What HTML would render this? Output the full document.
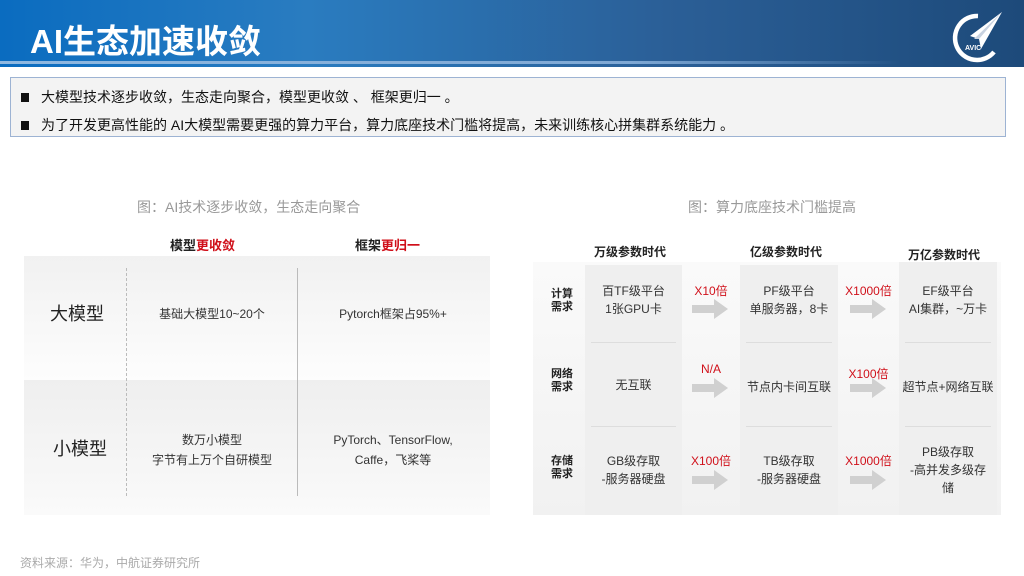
<!DOCTYPE html>
<html><head><meta charset="utf-8"><style>
*{margin:0;padding:0;box-sizing:border-box}
body{width:1024px;height:576px;position:relative;background:#fff;font-family:"Liberation Sans","Noto Sans CJK SC",sans-serif;overflow:hidden;color:#222}
.a{position:absolute}
.hdr{left:0;top:0;width:1024px;height:67px;background:linear-gradient(90deg,#0a6cc0 0%,#2a7cc0 30%,#2b5f97 65%,#1d4a7a 100%)}
.hl{left:0;top:61px;width:900px;height:3px;background:linear-gradient(90deg,#8fb8e0,#7fa8d4 70%,rgba(120,160,210,0))}
.title{left:30px;top:15px;font-size:33px;font-weight:bold;color:#fff}
.box{left:10px;top:77px;width:996px;height:60px;background:#f3f3f3;border:1px solid #9db3d3}
.box p{font-size:14px;line-height:28px;padding-left:10px;color:#111}
.box p b{display:inline-block;width:8px;height:9px;background:#111;margin-right:12px;vertical-align:0}
.cap{font-size:14px;color:#999}
.c{text-align:center}
.t{font-size:12px;color:#333}
.arrow{width:36px;height:20px}
.red{color:#d0101a}
</style></head><body>
<div class="a hdr"></div><div class="a hl"></div>
<div class="a title">AI生态加速收敛</div>
<svg class="a" style="left:948px;top:12px" width="56" height="52" viewBox="0 0 56 52">
<path d="M30 4 A22 22 0 1 0 46 40" fill="none" stroke="#fff" stroke-width="4.5"/>
<path d="M54 0 L22 24 L31 27 L33 37 Z" fill="#fff"/>
<path d="M54 0 L26 27 L31 27 Z" fill="#c8d2e0"/>
<text x="17" y="38" font-size="7" fill="#fff" font-family="Liberation Sans" font-weight="bold">AVIC</text>
</svg>
<div class="a box"><p style="margin-top:5px"><b></b>大模型技术逐步收敛，生态走向聚合，模型更收敛 、 框架更归一 。</p><p><b></b>为了开发更高性能的 AI大模型需要更强的算力平台，算力底座技术门槛将提高，未来训练核心拼集群系统能力 。</p></div>
<div class="a cap" style="left:137px;top:197px">图：AI技术逐步收敛，生态走向聚合</div>
<div class="a cap" style="left:688px;top:197px">图：算力底座技术门槛提高</div>
<div class="a" style="left:170px;top:235px;font-size:13px;font-weight:bold">模型<span class="red">更收敛</span></div>
<div class="a" style="left:355px;top:235px;font-size:13px;font-weight:bold">框架<span class="red">更归一</span></div>
<div class="a" style="left:24px;top:256px;width:466px;height:124px;background:linear-gradient(#f1f1f1,#fdfdfd)"></div>
<div class="a" style="left:24px;top:380px;width:466px;height:135px;background:linear-gradient(#efefef,#fafafa)"></div>
<div class="a" style="left:126px;top:268px;width:0;height:228px;border-left:1px dashed #bbb"></div>
<div class="a" style="left:297px;top:268px;width:0;height:228px;border-left:1px solid #bbb"></div>
<div class="a" style="left:50px;top:300px;font-size:18px">大模型</div>
<div class="a" style="left:53px;top:435px;font-size:18px">小模型</div>
<div class="a c t" style="left:127px;top:305px;width:170px">基础大模型10~20个</div>
<div class="a c t" style="left:298px;top:305px;width:190px">Pytorch框架占95%+</div>
<div class="a c t" style="left:127px;top:430px;width:170px;line-height:20px">数万小模型<br>字节有上万个自研模型</div>
<div class="a c t" style="left:298px;top:430px;width:190px;line-height:20px">PyTorch、TensorFlow,<br>Caffe，飞桨等</div>
<div class="a" style="left:533px;top:262px;width:468px;height:253px;background:linear-gradient(#fafafa,#f1f1f1)"></div>
<div class="a" style="left:585px;top:265px;width:97px;height:250px;background:#efefef"></div>
<div class="a" style="left:740px;top:265px;width:98px;height:250px;background:#efefef"></div>
<div class="a" style="left:899px;top:262px;width:98px;height:253px;background:#efefef"></div>
<div class="a" style="left:591px;top:342px;width:85px;height:1px;background:#ddd"></div>
<div class="a" style="left:746px;top:342px;width:86px;height:1px;background:#ddd"></div>
<div class="a" style="left:905px;top:342px;width:86px;height:1px;background:#ddd"></div>
<div class="a" style="left:591px;top:426px;width:85px;height:1px;background:#ddd"></div>
<div class="a" style="left:746px;top:426px;width:86px;height:1px;background:#ddd"></div>
<div class="a" style="left:905px;top:426px;width:86px;height:1px;background:#ddd"></div>
<div class="a" style="left:594px;top:243px;font-size:12px;font-weight:bold">万级参数时代</div>
<div class="a" style="left:750px;top:243px;font-size:12px;font-weight:bold">亿级参数时代</div>
<div class="a" style="left:908px;top:246px;font-size:12px;font-weight:bold">万亿参数时代</div>
<div class="a" style="left:551px;top:288px;font-size:11px;font-weight:bold;line-height:13px">计算<br>需求</div>
<div class="a" style="left:551px;top:368px;font-size:11px;font-weight:bold;line-height:13px">网络<br>需求</div>
<div class="a" style="left:551px;top:455px;font-size:11px;font-weight:bold;line-height:13px">存储<br>需求</div>
<div class="a c t" style="left:583px;top:282px;width:101px;line-height:18px">百TF级平台<br>1张GPU卡</div>
<div class="a c t" style="left:583px;top:376px;width:101px">无互联</div>
<div class="a c t" style="left:583px;top:452px;width:101px;line-height:18px">GB级存取<br>-服务器硬盘</div>
<div class="a c t" style="left:736px;top:282px;width:106px;line-height:18px">PF级平台<br>单服务器，8卡</div>
<div class="a c t" style="left:736px;top:378px;width:106px">节点内卡间互联</div>
<div class="a c t" style="left:736px;top:452px;width:106px;line-height:18px">TB级存取<br>-服务器硬盘</div>
<div class="a c t" style="left:895px;top:282px;width:106px;line-height:18px">EF级平台<br>AI集群，~万卡</div>
<div class="a c t" style="left:893px;top:378px;width:110px">超节点+网络互联</div>
<div class="a c t" style="left:895px;top:443px;width:106px;line-height:18px">PB级存取<br>-高并发多级存<br>储</div>
<div class="a red c" style="left:682px;top:282px;width:58px;font-size:12px">X10倍</div>
<div class="a red c" style="left:682px;top:362px;width:58px;font-size:12px">N/A</div>
<div class="a red c" style="left:682px;top:452px;width:58px;font-size:12px">X100倍</div>
<div class="a red c" style="left:838px;top:282px;width:61px;font-size:12px">X1000倍</div>
<div class="a red c" style="left:838px;top:365px;width:61px;font-size:12px">X100倍</div>
<div class="a red c" style="left:838px;top:452px;width:61px;font-size:12px">X1000倍</div>
<svg class="a arrow" style="left:692px;top:299px"><path d="M0 6h22v-6l14 10-14 10v-6H0z" fill="#d0d0d0"/></svg>
<svg class="a arrow" style="left:692px;top:378px"><path d="M0 6h22v-6l14 10-14 10v-6H0z" fill="#d0d0d0"/></svg>
<svg class="a arrow" style="left:692px;top:470px"><path d="M0 6h22v-6l14 10-14 10v-6H0z" fill="#d0d0d0"/></svg>
<svg class="a arrow" style="left:850px;top:299px"><path d="M0 6h22v-6l14 10-14 10v-6H0z" fill="#d0d0d0"/></svg>
<svg class="a arrow" style="left:850px;top:378px"><path d="M0 6h22v-6l14 10-14 10v-6H0z" fill="#d0d0d0"/></svg>
<svg class="a arrow" style="left:850px;top:470px"><path d="M0 6h22v-6l14 10-14 10v-6H0z" fill="#d0d0d0"/></svg>
<div class="a" style="left:20px;top:554px;font-size:12px;color:#aaa">资料来源：华为，中航证券研究所</div>
</body></html>
